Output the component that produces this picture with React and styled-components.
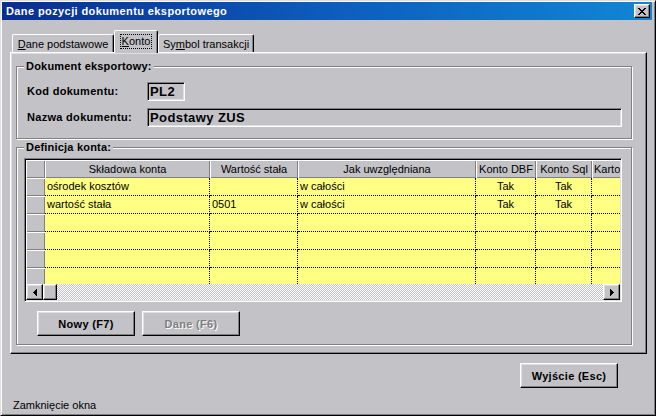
import React from "react";
import styled, { createGlobalStyle } from "styled-components";

const GREY = "#c3c2c6";
const YELLOW = "#ffff84";

const Global = createGlobalStyle`
  html, body {
    margin: 0;
    padding: 0;
    background: ${GREY};
  }
  body {
    font-family: "Liberation Sans", Arial, sans-serif;
    font-size: 11px;
    color: #000;
  }
`;

const Window = styled.div`
  width: 656px;
  height: 416px;
  box-sizing: border-box;
  background: ${GREY};
  border: 1px solid;
  border-color: #dfdfdf #000 #000 #dfdfdf;
  box-shadow: inset 1px 1px #fff, inset -1px -1px #808080;
  padding: 1px 3px 1px 1px;
  display: flex;
  flex-direction: column;
`;

const TitleBar = styled.div`
  height: 18px;
  flex-shrink: 0;
  display: flex;
  align-items: center;
  justify-content: space-between;
  padding: 0 2px 0 4px;
  background: linear-gradient(90deg, #0a2d8f 0%, #0d5cbc 50%, #1186d4 100%);
  color: #fff;
  font-weight: bold;
  letter-spacing: 0.4px;
`;

const Raised = `
  background: ${GREY};
  border: 1px solid;
  border-color: #fff #000 #000 #fff;
  box-shadow: inset -1px -1px #808080, inset 1px 1px #dfdfdf;
  box-sizing: border-box;
`;

const CloseButton = styled.div`
  ${Raised}
  width: 16px;
  height: 14px;
  display: flex;
  align-items: center;
  justify-content: center;
`;

const Body = styled.div`
  flex: 1;
  display: flex;
  flex-direction: column;
  padding: 10px 0 0 8px;
`;

const TabStrip = styled.div`
  height: 22px;
  display: flex;
  align-items: flex-end;
  padding-left: 2px;
  position: relative;
  z-index: 1;
`;

const Tab = styled.div`
  width: ${p => p.$w}px;
  height: ${p => (p.$active ? 23 : 18)}px;
  margin-bottom: ${p => (p.$active ? -1 : 0)}px;
  box-sizing: border-box;
  background: ${GREY};
  border-top: 1px solid #fff;
  border-left: 1px solid #fff;
  border-right: 1px solid #000;
  box-shadow: inset -1px 0 #808080;
  border-radius: 2px 2px 0 0;
  display: flex;
  align-items: ${p => (p.$active ? "flex-start" : "center")};
  justify-content: center;
  padding-top: ${p => (p.$active ? 4 : 0)}px;
  white-space: nowrap;
`;

const Focus = styled.span`
  outline: 1px dotted #000;
  padding: 0 1px;
  line-height: 13px;
`;

const Panel = styled.div`
  ${Raised}
  width: 637px;
  height: 302px;
  padding: 7px 14px 0 5px;
  display: flex;
  flex-direction: column;
`;

const Group = styled.fieldset`
  margin: ${p => p.$top || 0}px 0 0 0;
  padding: 0;
  min-width: 0;
  border: 1px solid #808080;
  box-shadow: inset 1px 1px #fff, 1px 1px #fff;
`;

const Legend = styled.legend`
  margin-left: 7px;
  padding: 0 2px;
  font-weight: bold;
  line-height: 13px;
  letter-spacing: 0.2px;
  background: ${GREY};
`;

const FieldRows = styled.div`
  display: flex;
  flex-direction: column;
  gap: 7px;
  padding: 9px 9px 11px 10px;
`;

const FieldRow = styled.div`
  display: flex;
  align-items: center;
`;

const Label = styled.div`
  width: 120px;
  font-weight: bold;
  line-height: 19px;
  letter-spacing: 0.3px;
`;

const Field = styled.div`
  width: ${p => (p.$w ? `${p.$w}px` : "auto")};
  flex: ${p => (p.$w ? "none" : 1)};
  height: 19px;
  box-sizing: border-box;
  border: 1px solid;
  border-color: #808080 #fff #fff #808080;
  box-shadow: inset 1px 1px #000, inset -1px -1px #dfdfdf;
  background: ${GREY};
  padding: 0 2px;
  font-size: 13px;
  font-weight: bold;
  letter-spacing: 0.4px;
  line-height: 17px;
  white-space: nowrap;
`;

const GroupBody = styled.div`
  padding: 4px 9px 8px 7px;
  display: flex;
  flex-direction: column;
`;

const Grid = styled.div`
  width: 598px;
  height: 144px;
  box-sizing: border-box;
  border: 1px solid;
  border-color: #808080 #fff #fff #808080;
  box-shadow: inset 1px 1px #000, inset -1px -1px #dfdfdf;
  padding: 1px;
  display: flex;
  flex-direction: column;
  background: ${GREY};
`;

const Rows = styled.div`
  flex: 1;
  overflow: hidden;
  display: flex;
  flex-direction: column;
`;

const Row = styled.div`
  display: flex;
  height: 18px;
  flex-shrink: 0;
`;

const HeadCell = styled.div`
  width: ${p => p.$w}px;
  flex-shrink: 0;
  box-sizing: border-box;
  background: ${GREY};
  box-shadow: inset 1px 1px #fff, inset -1px -1px #808080;
  text-align: ${p => p.$align || "center"};
  padding: 0 2px;
  line-height: 18px;
  white-space: nowrap;
  overflow: hidden;
`;

const Cell = styled.div`
  width: ${p => p.$w}px;
  flex-shrink: 0;
  box-sizing: border-box;
  background: ${YELLOW};
  border-right: 1px dotted #000;
  border-bottom: 1px dotted #000;
  padding: 0 2px;
  text-align: ${p => p.$align || "left"};
  line-height: 17px;
  white-space: nowrap;
  overflow: hidden;
`;

const ScrollBar = styled.div`
  height: 16px;
  flex-shrink: 0;
  display: flex;
`;

const ScrollButton = styled.div`
  ${Raised}
  width: ${p => p.$w}px;
  height: 16px;
  display: flex;
  align-items: center;
  justify-content: center;
`;

const Track = styled.div`
  flex: 1;
  background: repeating-conic-gradient(#fff 0 25%, ${GREY} 0 50%) 0 0 / 2px 2px;
`;

const ButtonRow = styled.div`
  display: flex;
  gap: 7px;
  padding: 9px 0 0 13px;
`;

const Button = styled.div`
  ${Raised}
  width: 98px;
  height: 25px;
  display: flex;
  align-items: center;
  justify-content: center;
  font-weight: bold;
  letter-spacing: 0.3px;
  color: ${p => (p.$disabled ? "#808080" : "#000")};
  text-shadow: ${p => (p.$disabled ? "1px 1px #fff" : "none")};
`;

const Footer = styled.div`
  width: 637px;
  display: flex;
  justify-content: flex-end;
  padding: 9px 29px 0 0;
  box-sizing: border-box;
`;

const Status = styled.div`
  padding: 10px 0 0 3px;
  line-height: 14px;
`;

const columns = [
  { title: "Składowa konta", w: 165 },
  { title: "Wartość stała", w: 88 },
  { title: "Jak uwzględniana", w: 178 },
  { title: "Konto DBF", w: 60, align: "center" },
  { title: "Konto Sql", w: 56, align: "center" },
  { title: "Karto", w: 60, align: "center", head: "left" }
];

const data = [
  ["ośrodek kosztów", "", "w całości", "Tak", "Tak", ""],
  ["wartość stała", "0501", "w całości", "Tak", "Tak", ""],
  ["", "", "", "", "", ""],
  ["", "", "", "", "", ""],
  ["", "", "", "", "", ""],
  ["", "", "", "", "", ""]
];

const CloseIcon = () => (
  <svg width="8" height="7" viewBox="0 0 8 7" shapeRendering="crispEdges">
    <path d="M0 0h2v1h-2zM6 0h2v1h-2zM1 1h2v1h-2zM5 1h2v1h-2zM2 2h4v1h-4zM3 3h2v1h-2zM2 4h4v1h-4zM1 5h2v1h-2zM5 5h2v1h-2zM0 6h2v1h-2zM6 6h2v1h-2z" fill="#000" />
  </svg>
);

const Arrow = ({ dir }) => (
  <svg width="4" height="7" viewBox="0 0 4 7" shapeRendering="crispEdges">
    {dir === "left" ? (
      <path d="M3 0h1v7h-1zM2 1h1v5h-1zM1 2h1v3h-1zM0 3h1v1h-1z" fill="#000" />
    ) : (
      <path d="M0 0h1v7h-1zM1 1h1v5h-1zM2 2h1v3h-1zM3 3h1v1h-1z" fill="#000" />
    )}
  </svg>
);

const App = () => {
  return (
    <Window>
      <Global />
      <TitleBar>
        <span>Dane pozycji dokumentu eksportowego</span>
        <CloseButton>
          <CloseIcon />
        </CloseButton>
      </TitleBar>
      <Body>
        <TabStrip>
          <Tab $w={102}>
            <span>
              <u>D</u>ane podstawowe
            </span>
          </Tab>
          <Tab $w={44} $active>
            <Focus>
              <u>K</u>onto
            </Focus>
          </Tab>
          <Tab $w={96}>
            <span>
              Sy<u>m</u>bol transakcji
            </span>
          </Tab>
        </TabStrip>
        <Panel>
          <Group>
            <Legend>Dokument eksportowy:</Legend>
            <FieldRows>
              <FieldRow>
                <Label>Kod dokumentu:</Label>
                <Field $w={38}>PL2</Field>
              </FieldRow>
              <FieldRow>
                <Label>Nazwa dokumentu:</Label>
                <Field>Podstawy ZUS</Field>
              </FieldRow>
            </FieldRows>
          </Group>
          <Group $top={2}>
            <Legend>Definicja konta:</Legend>
            <GroupBody>
              <Grid>
                <Rows>
                  <Row>
                    <HeadCell $w={19} />
                    {columns.map(c => (
                      <HeadCell key={c.title} $w={c.w} $align={c.head}>
                        {c.title}
                      </HeadCell>
                    ))}
                  </Row>
                  {data.map((r, i) => (
                    <Row key={i}>
                      <HeadCell $w={19} />
                      {r.map((v, j) => (
                        <Cell key={j} $w={columns[j].w} $align={columns[j].align}>
                          {v}
                        </Cell>
                      ))}
                    </Row>
                  ))}
                </Rows>
                <ScrollBar>
                  <ScrollButton $w={17}>
                    <Arrow dir="left" />
                  </ScrollButton>
                  <ScrollButton $w={14} />
                  <Track />
                  <ScrollButton $w={17}>
                    <Arrow dir="right" />
                  </ScrollButton>
                </ScrollBar>
              </Grid>
              <ButtonRow>
                <Button>Nowy (F7)</Button>
                <Button $disabled>Dane (F6)</Button>
              </ButtonRow>
            </GroupBody>
          </Group>
        </Panel>
        <Footer>
          <Button>Wyjście (Esc)</Button>
        </Footer>
        <Status>Zamknięcie okna</Status>
      </Body>
    </Window>
  );
};

export default App;
